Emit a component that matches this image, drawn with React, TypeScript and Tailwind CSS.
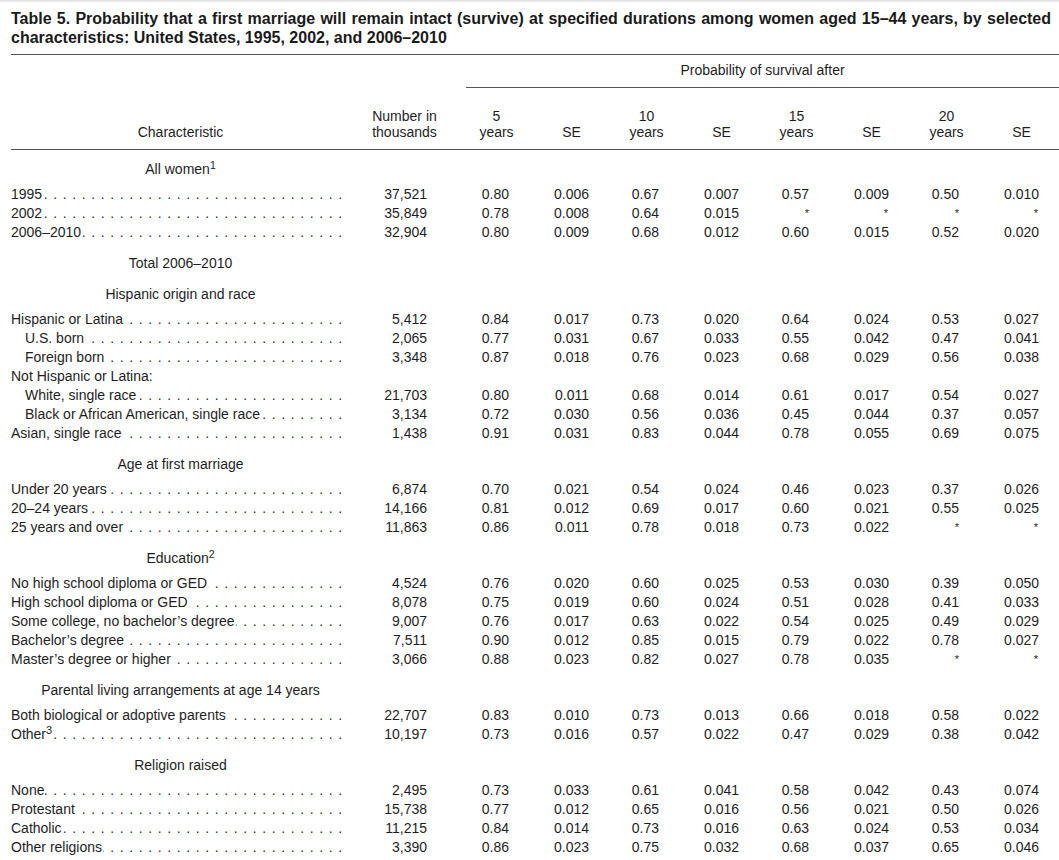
import React from "react";

type Row = { label: React.ReactNode; indent?: boolean; noDots?: boolean; num?: string; vals?: string[] };

const GRID = "grid grid-cols-[339px_109px_repeat(8,75px)]";
const DOTS = Array(46).fill(".").join(" ");

const sections: { title: React.ReactNode; top?: boolean; super?: React.ReactNode; rows: Row[] }[] = [
  {
    title: (
      <>
        All women<sup>1</sup>
      </>
    ),
    top: true,
    rows: [
      { label: "1995", num: "37,521", vals: ["0.80", "0.006", "0.67", "0.007", "0.57", "0.009", "0.50", "0.010"] },
      { label: "2002", num: "35,849", vals: ["0.78", "0.008", "0.64", "0.015", "*", "*", "*", "*"] },
      { label: "2006–2010", num: "32,904", vals: ["0.80", "0.009", "0.68", "0.012", "0.60", "0.015", "0.52", "0.020"] },
    ],
  },
  {
    super: "Total 2006–2010",
    title: "Hispanic origin and race",
    rows: [
      { label: "Hispanic or Latina", num: "5,412", vals: ["0.84", "0.017", "0.73", "0.020", "0.64", "0.024", "0.53", "0.027"] },
      { label: "U.S. born", indent: true, num: "2,065", vals: ["0.77", "0.031", "0.67", "0.033", "0.55", "0.042", "0.47", "0.041"] },
      { label: "Foreign born", indent: true, num: "3,348", vals: ["0.87", "0.018", "0.76", "0.023", "0.68", "0.029", "0.56", "0.038"] },
      { label: "Not Hispanic or Latina:", noDots: true },
      { label: "White, single race", indent: true, num: "21,703", vals: ["0.80", "0.011", "0.68", "0.014", "0.61", "0.017", "0.54", "0.027"] },
      { label: "Black or African American, single race", indent: true, num: "3,134", vals: ["0.72", "0.030", "0.56", "0.036", "0.45", "0.044", "0.37", "0.057"] },
      { label: "Asian, single race", num: "1,438", vals: ["0.91", "0.031", "0.83", "0.044", "0.78", "0.055", "0.69", "0.075"] },
    ],
  },
  {
    title: "Age at first marriage",
    rows: [
      { label: "Under 20 years", num: "6,874", vals: ["0.70", "0.021", "0.54", "0.024", "0.46", "0.023", "0.37", "0.026"] },
      { label: "20–24 years", num: "14,166", vals: ["0.81", "0.012", "0.69", "0.017", "0.60", "0.021", "0.55", "0.025"] },
      { label: "25 years and over", num: "11,863", vals: ["0.86", "0.011", "0.78", "0.018", "0.73", "0.022", "*", "*"] },
    ],
  },
  {
    title: (
      <>
        Education<sup>2</sup>
      </>
    ),
    rows: [
      { label: "No high school diploma or GED", num: "4,524", vals: ["0.76", "0.020", "0.60", "0.025", "0.53", "0.030", "0.39", "0.050"] },
      { label: "High school diploma or GED", num: "8,078", vals: ["0.75", "0.019", "0.60", "0.024", "0.51", "0.028", "0.41", "0.033"] },
      { label: "Some college, no bachelor’s degree", num: "9,007", vals: ["0.76", "0.017", "0.63", "0.022", "0.54", "0.025", "0.49", "0.029"] },
      { label: "Bachelor’s degree", num: "7,511", vals: ["0.90", "0.012", "0.85", "0.015", "0.79", "0.022", "0.78", "0.027"] },
      { label: "Master’s degree or higher", num: "3,066", vals: ["0.88", "0.023", "0.82", "0.027", "0.78", "0.035", "*", "*"] },
    ],
  },
  {
    title: "Parental living arrangements at age 14 years",
    rows: [
      { label: "Both biological or adoptive parents", num: "22,707", vals: ["0.83", "0.010", "0.73", "0.013", "0.66", "0.018", "0.58", "0.022"] },
      {
        label: (
          <>
            Other<sup className="text-[11px]">3</sup>
          </>
        ),
        num: "10,197",
        vals: ["0.73", "0.016", "0.57", "0.022", "0.47", "0.029", "0.38", "0.042"],
      },
    ],
  },
  {
    title: "Religion raised",
    rows: [
      { label: "None", num: "2,495", vals: ["0.73", "0.033", "0.61", "0.041", "0.58", "0.042", "0.43", "0.074"] },
      { label: "Protestant", num: "15,738", vals: ["0.77", "0.012", "0.65", "0.016", "0.56", "0.021", "0.50", "0.026"] },
      { label: "Catholic", num: "11,215", vals: ["0.84", "0.014", "0.73", "0.016", "0.63", "0.024", "0.53", "0.034"] },
      { label: "Other religions", num: "3,390", vals: ["0.86", "0.023", "0.75", "0.032", "0.68", "0.037", "0.65", "0.046"] },
    ],
  },
];

const heads = [
  ["5", "years"],
  ["", "SE"],
  ["10", "years"],
  ["", "SE"],
  ["15", "years"],
  ["", "SE"],
  ["20", "years"],
  ["", "SE"],
];

const DataRow = ({ row }: { row: Row }) => (
  <div className={`${GRID} leading-[19px]`}>
    <div className={`flex min-w-0 pr-[7px] ${row.indent ? "pl-[14px]" : ""}`}>
      <span className="shrink-0 whitespace-nowrap">{row.label}</span>
      {!row.noDots && (
        <span className="ml-[1px] flex min-w-0 flex-1 justify-end overflow-hidden whitespace-nowrap text-[#333]">
          <span className="shrink-0 tracking-[0.86px]">{DOTS}</span>
        </span>
      )}
    </div>
    <div className="pr-[32px] text-right">{row.num}</div>
    {(row.vals ?? []).map((v, i) =>
      v === "*" ? (
        <div key={i} className={`text-right text-[11px] ${i % 2 === 0 ? "pr-[25px]" : "pr-[21px]"}`}>
          *
        </div>
      ) : (
        <div key={i} className={`text-right ${i % 2 === 0 ? "pr-[25px]" : "pr-[20px]"}`}>
          {v}
        </div>
      )
    )}
  </div>
);

const SectionHead = ({ children, first, last }: { children: React.ReactNode; first?: boolean; last?: boolean }) => (
  <div className={`w-[339px] text-center leading-[19px] ${first ? "pt-[10px]" : "pt-[12px]"} ${last ? "pb-[6px]" : ""}`}>
    {children}
  </div>
);

export default function App() {
  return (
    <div className="min-h-screen bg-white font-['Liberation_Sans',Arial,sans-serif] text-[14px] text-[#1e1e1e]">
      <div className="h-[3px] bg-gradient-to-b from-[#dedede] to-white" />
      <div className="pl-[11px]">
        <h1 className="pt-[6px] text-[16px] font-bold leading-[19px] text-[#1a1a1a] whitespace-nowrap">
          <span className="[word-spacing:0.8px]">
            Table 5. Probability that a first marriage will remain intact (survive) at specified durations among women aged 15–44 years, by selected
          </span>
          <br />
          characteristics: United States, 1995, 2002, and 2006–2010
        </h1>

        <div className="mt-[7px] w-[1048px]">
          {/* column heads */}
          <div className={`${GRID} border-y border-[#555] leading-[16px]`}>
            <div className="row-span-2 flex items-end justify-center pb-[9px]">Characteristic</div>
            <div className="row-span-2 flex flex-col items-center justify-end pb-[9px]">
              <span>Number in</span>
              <span>thousands</span>
            </div>
            <div className="col-span-8 ml-[7px] border-b border-[#555] pb-[9px] pt-[7px] text-center">
              Probability of survival after
            </div>
            {heads.map(([a, b], i) => (
              <div key={i} className="flex flex-col items-center justify-end pb-[9px] pt-[20px]">
                {a && <span>{a}</span>}
                <span>{b}</span>
              </div>
            ))}
          </div>

          {/* body */}
          {sections.map((s, si) => (
            <div key={si}>
              {s.super && <SectionHead>{s.super}</SectionHead>}
              <SectionHead first={s.top} last>
                {s.title}
              </SectionHead>
              {s.rows.map((r, ri) => (
                <DataRow key={ri} row={r} />
              ))}
            </div>
          ))}
        </div>
      </div>
    </div>
  );
}
